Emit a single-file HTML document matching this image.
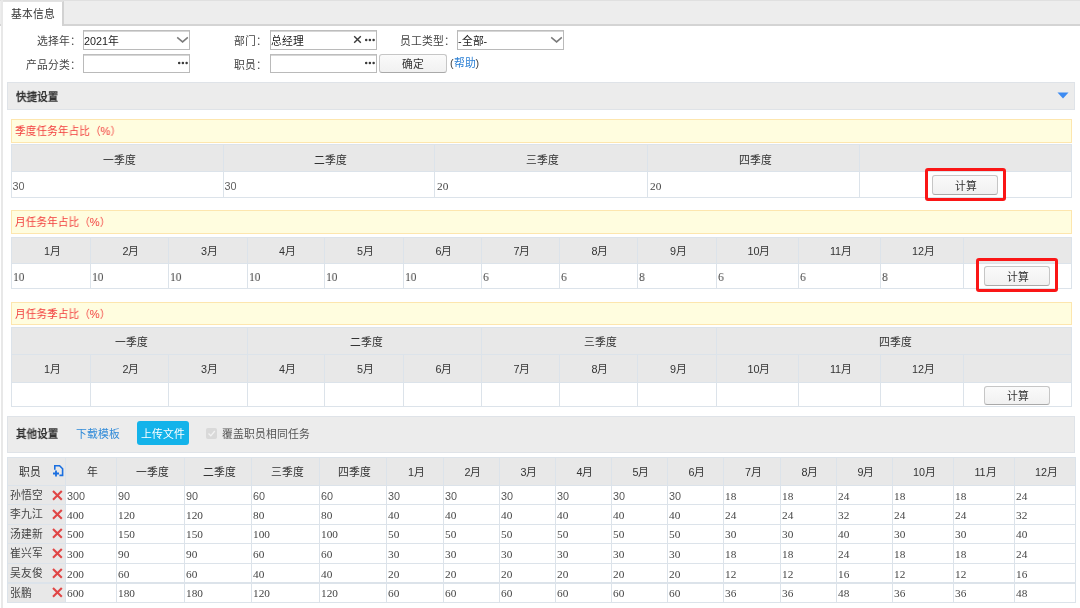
<!DOCTYPE html><html lang="zh-CN"><head><meta charset="utf-8"><style>
html,body{margin:0;padding:0;background:#fff;width:1080px;height:608px;overflow:hidden;position:relative;}
body{font-family:"Liberation Sans",sans-serif;font-size:10.8px;color:#333;}
.a{position:absolute;box-sizing:border-box;}
.t{position:absolute;white-space:nowrap;line-height:0;height:0;will-change:transform;}
.t.c{text-align:center;}
.sr{font-family:"Liberation Serif",serif;color:#444;font-size:11.3px;}
.sr2{font-family:"Liberation Serif",serif;color:#444;font-size:12.5px;transform:scaleX(0.92);transform-origin:0 0;}
.ss{font-family:"Liberation Sans",sans-serif;font-size:10.8px;color:#555;}
.btn{background:linear-gradient(#fafafa,#f1f1f1);border:1px solid #c6c6c6;border-bottom-color:#a9a9a9;border-radius:3px;}
.inp{background:#fff;border:1px solid #bababa;border-top-color:#bdbdbd;box-shadow:inset 0 1px 0 #d6d6d6;}
.hd{background:#e9e9e9;}
.bd{border-color:#dce2e9;}
</style></head><body><div class="a " style="left:0px;top:0px;width:1080px;height:26px;background:#ededed;border-bottom:2px solid #d4d4d4;"></div>
<div class="a " style="left:0px;top:0px;width:1080px;height:1px;background:#e0e0e0;"></div>
<div class="a " style="left:1px;top:0px;width:2px;height:608px;background:#e8e8e8;"></div>
<div class="a " style="left:3px;top:1px;width:61px;height:25px;background:#fff;border-right:2px solid #d2d2d2;border-top:1px solid #e3e3e3;"></div>
<div class="t " style="left:11px;top:13.5px;">基本信息</div>
<div class="t " style="left:80.5px;top:40.5px;transform:translateX(-100%);color:#444;">选择年：</div>
<div class="a inp" style="left:83px;top:30px;width:107px;height:20px;"></div>
<div class="t " style="left:84px;top:40.5px;color:#222;">2021年</div>
<svg class="a" style="left:176px;top:36px" width="13" height="8"><path d="M1.2 1.4 L6.6 5.9 L11.8 1.4" fill="none" stroke="#7a7a7a" stroke-width="1.5"/></svg>
<div class="t " style="left:80.5px;top:64.5px;transform:translateX(-100%);color:#444;">产品分类：</div>
<div class="a inp" style="left:83px;top:54px;width:107px;height:19px;"></div>
<svg class="a" style="left:178px;top:61px" width="11" height="4"><circle cx="1.2" cy="2" r="1.25" fill="#3a3a3a"/><circle cx="4.9" cy="2" r="1.25" fill="#3a3a3a"/><circle cx="8.6" cy="2" r="1.25" fill="#3a3a3a"/></svg>
<div class="t " style="left:267px;top:40.5px;transform:translateX(-100%);color:#444;">部门：</div>
<div class="a inp" style="left:270px;top:30px;width:107px;height:20px;"></div>
<div class="t " style="left:270.5px;top:40.5px;color:#222;">总经理</div>
<svg class="a" style="left:353px;top:35px" width="9" height="9"><path d="M1.2 1.2 L7.8 7.8 M7.8 1.2 L1.2 7.8" stroke="#3a3a3a" stroke-width="1.4"/></svg>
<svg class="a" style="left:365px;top:38px" width="11" height="4"><circle cx="1.2" cy="2" r="1.25" fill="#3a3a3a"/><circle cx="4.9" cy="2" r="1.25" fill="#3a3a3a"/><circle cx="8.6" cy="2" r="1.25" fill="#3a3a3a"/></svg>
<div class="t " style="left:267px;top:64.5px;transform:translateX(-100%);color:#444;">职员：</div>
<div class="a inp" style="left:270px;top:54px;width:107px;height:19px;"></div>
<svg class="a" style="left:365px;top:61px" width="11" height="4"><circle cx="1.2" cy="2" r="1.25" fill="#3a3a3a"/><circle cx="4.9" cy="2" r="1.25" fill="#3a3a3a"/><circle cx="8.6" cy="2" r="1.25" fill="#3a3a3a"/></svg>
<div class="a btn" style="left:379px;top:54px;width:68px;height:19px;"></div>
<div class="t c " style="left:379px;width:68px;top:64px;color:#333;">确定</div>
<div class="t " style="left:449.5px;top:62.5px;color:#444;">(<span style="color:#2a7fd4">帮助</span>)</div>
<div class="t " style="left:454.5px;top:40.5px;transform:translateX(-100%);color:#444;">员工类型：</div>
<div class="a inp" style="left:457px;top:30px;width:107px;height:20px;"></div>
<div class="t " style="left:458px;top:40.5px;color:#222;">-全部-</div>
<svg class="a" style="left:550px;top:36px" width="13" height="8"><path d="M1.2 1.4 L6.6 5.9 L11.8 1.4" fill="none" stroke="#7a7a7a" stroke-width="1.5"/></svg>
<div class="a " style="left:7px;top:82px;width:1068px;height:28px;background:#ececec;border:1px solid #dfe3e8;"></div>
<div class="t " style="left:16.3px;top:96.8px;font-weight:bold;color:#333;transform:scaleX(0.965);transform-origin:0 0;">快捷设置</div>
<svg class="a" style="left:1057px;top:92px" width="12" height="7"><path d="M0.5 0.5 L11.5 0.5 L6 6.5 Z" fill="#3d8bf2"/></svg>
<div class="a " style="left:11px;top:119px;width:1061px;height:24px;background:#fffddf;border:1px solid #fde6ae;"></div>
<div class="t " style="left:15.2px;top:131.3px;color:#f23c3c;transform:scaleX(0.975);transform-origin:0 0;">季度任务年占比<span style="margin-left:-0.5px">（</span><span style="font-size:11.5px;letter-spacing:0.2px">%</span>）</div>
<div class="a " style="left:11px;top:144px;width:213px;height:28px;background:#e8e8e8;border:1px solid #dce3ea;"></div>
<div class="a " style="left:223px;top:144px;width:212px;height:28px;background:#e8e8e8;border:1px solid #dce3ea;"></div>
<div class="a " style="left:434px;top:144px;width:214px;height:28px;background:#e8e8e8;border:1px solid #dce3ea;"></div>
<div class="a " style="left:647px;top:144px;width:213px;height:28px;background:#e8e8e8;border:1px solid #dce3ea;"></div>
<div class="a " style="left:859px;top:144px;width:213px;height:28px;background:#e8e8e8;border:1px solid #dce3ea;"></div>
<div class="t c " style="left:12.5px;width:212.0px;top:159.5px;color:#333;">一季度</div>
<div class="t c " style="left:224.5px;width:211.0px;top:159.5px;color:#333;">二季度</div>
<div class="t c " style="left:435.5px;width:213.0px;top:159.5px;color:#333;">三季度</div>
<div class="t c " style="left:648.5px;width:212.0px;top:159.5px;color:#333;">四季度</div>
<div class="a " style="left:11px;top:171px;width:213px;height:27px;background:#fff;border:1px solid #dce3ea;"></div>
<div class="a " style="left:223px;top:171px;width:212px;height:27px;background:#fff;border:1px solid #dce3ea;"></div>
<div class="a " style="left:434px;top:171px;width:214px;height:27px;background:#fff;border:1px solid #dce3ea;"></div>
<div class="a " style="left:647px;top:171px;width:213px;height:27px;background:#fff;border:1px solid #dce3ea;"></div>
<div class="a " style="left:859px;top:171px;width:213px;height:27px;background:#fff;border:1px solid #dce3ea;"></div>
<div class="t " style="left:13.5px;top:185.5px;color:#606060;"><span style="margin-left:-1.5px">30</span></div>
<div class="t " style="left:225.5px;top:185.5px;color:#606060;"><span style="margin-left:-1.5px">30</span></div>
<div class="t " style="left:436.5px;top:185.5px;color:#606060;"><span class="sr">20</span></div>
<div class="t " style="left:649.5px;top:185.5px;color:#606060;"><span class="sr">20</span></div>
<div class="a btn" style="left:932px;top:175px;width:66px;height:20px;"></div>
<div class="t c " style="left:933px;width:66px;top:185.5px;color:#333;">计算</div>
<div class="a " style="left:925px;top:167.5px;width:80.5px;height:33.0px;border:3px solid #fa1616;border-radius:3px;"></div>
<div class="a " style="left:11px;top:210px;width:1061px;height:24px;background:#fffddf;border:1px solid #fde6ae;"></div>
<div class="t " style="left:15.2px;top:222.3px;color:#f23c3c;transform:scaleX(0.975);transform-origin:0 0;">月任务年占比<span style="margin-left:-0.5px">（</span><span style="font-size:11.5px;letter-spacing:0.2px">%</span>）</div>
<div class="a " style="left:11px;top:237px;width:80px;height:27px;background:#e8e8e8;border:1px solid #dce3ea;"></div>
<div class="a " style="left:90px;top:237px;width:79px;height:27px;background:#e8e8e8;border:1px solid #dce3ea;"></div>
<div class="a " style="left:168px;top:237px;width:80px;height:27px;background:#e8e8e8;border:1px solid #dce3ea;"></div>
<div class="a " style="left:247px;top:237px;width:78px;height:27px;background:#e8e8e8;border:1px solid #dce3ea;"></div>
<div class="a " style="left:324px;top:237px;width:80px;height:27px;background:#e8e8e8;border:1px solid #dce3ea;"></div>
<div class="a " style="left:403px;top:237px;width:79px;height:27px;background:#e8e8e8;border:1px solid #dce3ea;"></div>
<div class="a " style="left:481px;top:237px;width:79px;height:27px;background:#e8e8e8;border:1px solid #dce3ea;"></div>
<div class="a " style="left:559px;top:237px;width:79px;height:27px;background:#e8e8e8;border:1px solid #dce3ea;"></div>
<div class="a " style="left:637px;top:237px;width:80px;height:27px;background:#e8e8e8;border:1px solid #dce3ea;"></div>
<div class="a " style="left:716px;top:237px;width:83px;height:27px;background:#e8e8e8;border:1px solid #dce3ea;"></div>
<div class="a " style="left:798px;top:237px;width:83px;height:27px;background:#e8e8e8;border:1px solid #dce3ea;"></div>
<div class="a " style="left:880px;top:237px;width:84px;height:27px;background:#e8e8e8;border:1px solid #dce3ea;"></div>
<div class="a " style="left:963px;top:237px;width:109px;height:27px;background:#e8e8e8;border:1px solid #dce3ea;"></div>
<div class="t c " style="left:12.5px;width:79.0px;top:250.5px;color:#333;">1月</div>
<div class="t c " style="left:91.5px;width:78.0px;top:250.5px;color:#333;">2月</div>
<div class="t c " style="left:169.5px;width:79.0px;top:250.5px;color:#333;">3月</div>
<div class="t c " style="left:248.5px;width:77.0px;top:250.5px;color:#333;">4月</div>
<div class="t c " style="left:325.5px;width:79.0px;top:250.5px;color:#333;">5月</div>
<div class="t c " style="left:404.5px;width:78.0px;top:250.5px;color:#333;">6月</div>
<div class="t c " style="left:482.5px;width:78.0px;top:250.5px;color:#333;">7月</div>
<div class="t c " style="left:560.5px;width:78.0px;top:250.5px;color:#333;">8月</div>
<div class="t c " style="left:638.5px;width:79.0px;top:250.5px;color:#333;">9月</div>
<div class="t c " style="left:717.5px;width:82.0px;top:250.5px;color:#333;">10月</div>
<div class="t c " style="left:799.5px;width:82.0px;top:250.5px;color:#333;">11月</div>
<div class="t c " style="left:881.5px;width:83.0px;top:250.5px;color:#333;">12月</div>
<div class="a " style="left:11px;top:263px;width:80px;height:26px;background:#fff;border:1px solid #dce3ea;"></div>
<div class="a " style="left:90px;top:263px;width:79px;height:26px;background:#fff;border:1px solid #dce3ea;"></div>
<div class="a " style="left:168px;top:263px;width:80px;height:26px;background:#fff;border:1px solid #dce3ea;"></div>
<div class="a " style="left:247px;top:263px;width:78px;height:26px;background:#fff;border:1px solid #dce3ea;"></div>
<div class="a " style="left:324px;top:263px;width:80px;height:26px;background:#fff;border:1px solid #dce3ea;"></div>
<div class="a " style="left:403px;top:263px;width:79px;height:26px;background:#fff;border:1px solid #dce3ea;"></div>
<div class="a " style="left:481px;top:263px;width:79px;height:26px;background:#fff;border:1px solid #dce3ea;"></div>
<div class="a " style="left:559px;top:263px;width:79px;height:26px;background:#fff;border:1px solid #dce3ea;"></div>
<div class="a " style="left:637px;top:263px;width:80px;height:26px;background:#fff;border:1px solid #dce3ea;"></div>
<div class="a " style="left:716px;top:263px;width:83px;height:26px;background:#fff;border:1px solid #dce3ea;"></div>
<div class="a " style="left:798px;top:263px;width:83px;height:26px;background:#fff;border:1px solid #dce3ea;"></div>
<div class="a " style="left:880px;top:263px;width:84px;height:26px;background:#fff;border:1px solid #dce3ea;"></div>
<div class="a " style="left:963px;top:263px;width:109px;height:26px;background:#fff;border:1px solid #dce3ea;"></div>
<div class="t sr2" style="left:13px;top:277.0px;">10</div>
<div class="t sr2" style="left:92px;top:277.0px;">10</div>
<div class="t sr2" style="left:170px;top:277.0px;">10</div>
<div class="t sr2" style="left:249px;top:277.0px;">10</div>
<div class="t sr2" style="left:326px;top:277.0px;">10</div>
<div class="t sr2" style="left:405px;top:277.0px;">10</div>
<div class="t sr2" style="left:483px;top:277.0px;">6</div>
<div class="t sr2" style="left:561px;top:277.0px;">6</div>
<div class="t sr2" style="left:639px;top:277.0px;">8</div>
<div class="t sr2" style="left:718px;top:277.0px;">6</div>
<div class="t sr2" style="left:800px;top:277.0px;">6</div>
<div class="t sr2" style="left:882px;top:277.0px;">8</div>
<div class="a btn" style="left:984px;top:266px;width:66px;height:20px;"></div>
<div class="t c " style="left:985px;width:66px;top:276.5px;color:#333;">计算</div>
<div class="a " style="left:976px;top:258px;width:82px;height:33.5px;border:3px solid #fa1616;border-radius:3px;"></div>
<div class="a " style="left:11px;top:302px;width:1061px;height:23px;background:#fffddf;border:1px solid #fde6ae;"></div>
<div class="t " style="left:15.2px;top:313.8px;color:#f23c3c;transform:scaleX(0.975);transform-origin:0 0;">月任务季占比<span style="margin-left:-0.5px">（</span><span style="font-size:11.5px;letter-spacing:0.2px">%</span>）</div>
<div class="a " style="left:11px;top:327px;width:237px;height:28px;background:#e8e8e8;border:1px solid #dce3ea;"></div>
<div class="a " style="left:247px;top:327px;width:235px;height:28px;background:#e8e8e8;border:1px solid #dce3ea;"></div>
<div class="a " style="left:481px;top:327px;width:236px;height:28px;background:#e8e8e8;border:1px solid #dce3ea;"></div>
<div class="a " style="left:716px;top:327px;width:356px;height:28px;background:#e8e8e8;border:1px solid #dce3ea;"></div>
<div class="t c " style="left:12.5px;width:236.0px;top:342.0px;color:#333;">一季度</div>
<div class="t c " style="left:248.5px;width:234.0px;top:342.0px;color:#333;">二季度</div>
<div class="t c " style="left:482.5px;width:235.0px;top:342.0px;color:#333;">三季度</div>
<div class="t c " style="left:717.5px;width:355.0px;top:342.0px;color:#333;">四季度</div>
<div class="a " style="left:11px;top:354px;width:80px;height:29px;background:#e8e8e8;border:1px solid #dce3ea;"></div>
<div class="a " style="left:90px;top:354px;width:79px;height:29px;background:#e8e8e8;border:1px solid #dce3ea;"></div>
<div class="a " style="left:168px;top:354px;width:80px;height:29px;background:#e8e8e8;border:1px solid #dce3ea;"></div>
<div class="a " style="left:247px;top:354px;width:78px;height:29px;background:#e8e8e8;border:1px solid #dce3ea;"></div>
<div class="a " style="left:324px;top:354px;width:80px;height:29px;background:#e8e8e8;border:1px solid #dce3ea;"></div>
<div class="a " style="left:403px;top:354px;width:79px;height:29px;background:#e8e8e8;border:1px solid #dce3ea;"></div>
<div class="a " style="left:481px;top:354px;width:79px;height:29px;background:#e8e8e8;border:1px solid #dce3ea;"></div>
<div class="a " style="left:559px;top:354px;width:79px;height:29px;background:#e8e8e8;border:1px solid #dce3ea;"></div>
<div class="a " style="left:637px;top:354px;width:80px;height:29px;background:#e8e8e8;border:1px solid #dce3ea;"></div>
<div class="a " style="left:716px;top:354px;width:83px;height:29px;background:#e8e8e8;border:1px solid #dce3ea;"></div>
<div class="a " style="left:798px;top:354px;width:83px;height:29px;background:#e8e8e8;border:1px solid #dce3ea;"></div>
<div class="a " style="left:880px;top:354px;width:84px;height:29px;background:#e8e8e8;border:1px solid #dce3ea;"></div>
<div class="a " style="left:963px;top:354px;width:109px;height:29px;background:#e8e8e8;border:1px solid #dce3ea;"></div>
<div class="t c " style="left:12.5px;width:79.0px;top:368.5px;color:#333;">1月</div>
<div class="t c " style="left:91.5px;width:78.0px;top:368.5px;color:#333;">2月</div>
<div class="t c " style="left:169.5px;width:79.0px;top:368.5px;color:#333;">3月</div>
<div class="t c " style="left:248.5px;width:77.0px;top:368.5px;color:#333;">4月</div>
<div class="t c " style="left:325.5px;width:79.0px;top:368.5px;color:#333;">5月</div>
<div class="t c " style="left:404.5px;width:78.0px;top:368.5px;color:#333;">6月</div>
<div class="t c " style="left:482.5px;width:78.0px;top:368.5px;color:#333;">7月</div>
<div class="t c " style="left:560.5px;width:78.0px;top:368.5px;color:#333;">8月</div>
<div class="t c " style="left:638.5px;width:79.0px;top:368.5px;color:#333;">9月</div>
<div class="t c " style="left:717.5px;width:82.0px;top:368.5px;color:#333;">10月</div>
<div class="t c " style="left:799.5px;width:82.0px;top:368.5px;color:#333;">11月</div>
<div class="t c " style="left:881.5px;width:83.0px;top:368.5px;color:#333;">12月</div>
<div class="a " style="left:11px;top:382px;width:80px;height:25px;background:#fff;border:1px solid #dce3ea;"></div>
<div class="a " style="left:90px;top:382px;width:79px;height:25px;background:#fff;border:1px solid #dce3ea;"></div>
<div class="a " style="left:168px;top:382px;width:80px;height:25px;background:#fff;border:1px solid #dce3ea;"></div>
<div class="a " style="left:247px;top:382px;width:78px;height:25px;background:#fff;border:1px solid #dce3ea;"></div>
<div class="a " style="left:324px;top:382px;width:80px;height:25px;background:#fff;border:1px solid #dce3ea;"></div>
<div class="a " style="left:403px;top:382px;width:79px;height:25px;background:#fff;border:1px solid #dce3ea;"></div>
<div class="a " style="left:481px;top:382px;width:79px;height:25px;background:#fff;border:1px solid #dce3ea;"></div>
<div class="a " style="left:559px;top:382px;width:79px;height:25px;background:#fff;border:1px solid #dce3ea;"></div>
<div class="a " style="left:637px;top:382px;width:80px;height:25px;background:#fff;border:1px solid #dce3ea;"></div>
<div class="a " style="left:716px;top:382px;width:83px;height:25px;background:#fff;border:1px solid #dce3ea;"></div>
<div class="a " style="left:798px;top:382px;width:83px;height:25px;background:#fff;border:1px solid #dce3ea;"></div>
<div class="a " style="left:880px;top:382px;width:84px;height:25px;background:#fff;border:1px solid #dce3ea;"></div>
<div class="a " style="left:963px;top:382px;width:109px;height:25px;background:#fff;border:1px solid #dce3ea;"></div>
<div class="a btn" style="left:984px;top:386px;width:66px;height:19px;"></div>
<div class="t c " style="left:985px;width:66px;top:395.5px;color:#333;">计算</div>
<div class="a " style="left:7px;top:416px;width:1068px;height:37px;background:#ececec;border:1px solid #dfe3e8;"></div>
<div class="t " style="left:16.3px;top:434px;font-weight:bold;color:#333;transform:scaleX(0.965);transform-origin:0 0;">其他设置</div>
<div class="t " style="left:75.5px;top:434px;color:#2f8ad8;">下载模板</div>
<div class="a " style="left:137px;top:421px;width:52px;height:24px;background:#13b3ea;border-radius:3px;"></div>
<div class="t c " style="left:137px;width:52px;top:433.5px;color:#fff;">上传文件</div>
<div class="a " style="left:206px;top:428px;width:11px;height:11px;background:#d9d9d9;border-radius:2px;"></div>
<svg class="a" style="left:207px;top:429px" width="9" height="9"><path d="M1.5 4.5 L3.8 6.8 L7.8 2" fill="none" stroke="#f2f2f2" stroke-width="1.3"/></svg>
<div class="t " style="left:221.5px;top:434px;color:#555;">覆盖职员相同任务</div>
<div class="a " style="left:7px;top:457px;width:59px;height:29px;background:#e8e8e8;border:1px solid #dce3ea;"></div>
<div class="a " style="left:65px;top:457px;width:52px;height:29px;background:#e8e8e8;border:1px solid #dce3ea;"></div>
<div class="a " style="left:116px;top:457px;width:69px;height:29px;background:#e8e8e8;border:1px solid #dce3ea;"></div>
<div class="a " style="left:184px;top:457px;width:68px;height:29px;background:#e8e8e8;border:1px solid #dce3ea;"></div>
<div class="a " style="left:251px;top:457px;width:69px;height:29px;background:#e8e8e8;border:1px solid #dce3ea;"></div>
<div class="a " style="left:319px;top:457px;width:68px;height:29px;background:#e8e8e8;border:1px solid #dce3ea;"></div>
<div class="a " style="left:386px;top:457px;width:58px;height:29px;background:#e8e8e8;border:1px solid #dce3ea;"></div>
<div class="a " style="left:443px;top:457px;width:57px;height:29px;background:#e8e8e8;border:1px solid #dce3ea;"></div>
<div class="a " style="left:499px;top:457px;width:57px;height:29px;background:#e8e8e8;border:1px solid #dce3ea;"></div>
<div class="a " style="left:555px;top:457px;width:57px;height:29px;background:#e8e8e8;border:1px solid #dce3ea;"></div>
<div class="a " style="left:611px;top:457px;width:57px;height:29px;background:#e8e8e8;border:1px solid #dce3ea;"></div>
<div class="a " style="left:667px;top:457px;width:57px;height:29px;background:#e8e8e8;border:1px solid #dce3ea;"></div>
<div class="a " style="left:723px;top:457px;width:58px;height:29px;background:#e8e8e8;border:1px solid #dce3ea;"></div>
<div class="a " style="left:780px;top:457px;width:57px;height:29px;background:#e8e8e8;border:1px solid #dce3ea;"></div>
<div class="a " style="left:836px;top:457px;width:57px;height:29px;background:#e8e8e8;border:1px solid #dce3ea;"></div>
<div class="a " style="left:892px;top:457px;width:62px;height:29px;background:#e8e8e8;border:1px solid #dce3ea;"></div>
<div class="a " style="left:953px;top:457px;width:62px;height:29px;background:#e8e8e8;border:1px solid #dce3ea;"></div>
<div class="a " style="left:1014px;top:457px;width:62px;height:29px;background:#e8e8e8;border:1px solid #dce3ea;"></div>
<div class="t c " style="left:66.5px;width:51.0px;top:471.5px;color:#333;">年</div>
<div class="t c " style="left:117.5px;width:68.0px;top:471.5px;color:#333;">一季度</div>
<div class="t c " style="left:185.5px;width:67.0px;top:471.5px;color:#333;">二季度</div>
<div class="t c " style="left:252.5px;width:68.0px;top:471.5px;color:#333;">三季度</div>
<div class="t c " style="left:320.5px;width:67.0px;top:471.5px;color:#333;">四季度</div>
<div class="t c " style="left:387.5px;width:57.0px;top:471.5px;color:#333;">1月</div>
<div class="t c " style="left:444.5px;width:56.0px;top:471.5px;color:#333;">2月</div>
<div class="t c " style="left:500.5px;width:56.0px;top:471.5px;color:#333;">3月</div>
<div class="t c " style="left:556.5px;width:56.0px;top:471.5px;color:#333;">4月</div>
<div class="t c " style="left:612.5px;width:56.0px;top:471.5px;color:#333;">5月</div>
<div class="t c " style="left:668.5px;width:56.0px;top:471.5px;color:#333;">6月</div>
<div class="t c " style="left:724.5px;width:57.0px;top:471.5px;color:#333;">7月</div>
<div class="t c " style="left:781.5px;width:56.0px;top:471.5px;color:#333;">8月</div>
<div class="t c " style="left:837.5px;width:56.0px;top:471.5px;color:#333;">9月</div>
<div class="t c " style="left:893.5px;width:61.0px;top:471.5px;color:#333;">10月</div>
<div class="t c " style="left:954.5px;width:61.0px;top:471.5px;color:#333;">11月</div>
<div class="t c " style="left:1015.5px;width:61.0px;top:471.5px;color:#333;">12月</div>
<div class="a " style="left:7px;top:485px;width:59px;height:20px;background:#e8e8e8;border:1px solid #dce3ea;"></div>
<div class="t " style="left:9.5px;top:495.0px;color:#444;">孙悟空</div>
<svg class="a" style="left:51px;top:488.5px" width="13" height="12"><path d="M2 2 L10.8 10.8 M10.8 2 L2 10.8" stroke="#e04646" stroke-width="2.1"/></svg>
<div class="a " style="left:65px;top:485px;width:52px;height:20px;background:#fff;border:1px solid #dce3ea;"></div>
<div class="a " style="left:116px;top:485px;width:69px;height:20px;background:#fff;border:1px solid #dce3ea;"></div>
<div class="a " style="left:184px;top:485px;width:68px;height:20px;background:#fff;border:1px solid #dce3ea;"></div>
<div class="a " style="left:251px;top:485px;width:69px;height:20px;background:#fff;border:1px solid #dce3ea;"></div>
<div class="a " style="left:319px;top:485px;width:68px;height:20px;background:#fff;border:1px solid #dce3ea;"></div>
<div class="a " style="left:386px;top:485px;width:58px;height:20px;background:#fff;border:1px solid #dce3ea;"></div>
<div class="a " style="left:443px;top:485px;width:57px;height:20px;background:#fff;border:1px solid #dce3ea;"></div>
<div class="a " style="left:499px;top:485px;width:57px;height:20px;background:#fff;border:1px solid #dce3ea;"></div>
<div class="a " style="left:555px;top:485px;width:57px;height:20px;background:#fff;border:1px solid #dce3ea;"></div>
<div class="a " style="left:611px;top:485px;width:57px;height:20px;background:#fff;border:1px solid #dce3ea;"></div>
<div class="a " style="left:667px;top:485px;width:57px;height:20px;background:#fff;border:1px solid #dce3ea;"></div>
<div class="a " style="left:723px;top:485px;width:58px;height:20px;background:#fff;border:1px solid #dce3ea;"></div>
<div class="a " style="left:780px;top:485px;width:57px;height:20px;background:#fff;border:1px solid #dce3ea;"></div>
<div class="a " style="left:836px;top:485px;width:57px;height:20px;background:#fff;border:1px solid #dce3ea;"></div>
<div class="a " style="left:892px;top:485px;width:62px;height:20px;background:#fff;border:1px solid #dce3ea;"></div>
<div class="a " style="left:953px;top:485px;width:62px;height:20px;background:#fff;border:1px solid #dce3ea;"></div>
<div class="a " style="left:1014px;top:485px;width:62px;height:20px;background:#fff;border:1px solid #dce3ea;"></div>
<div class="t sr" style="left:66.5px;top:495.5px;"><span class="ss">300</span></div>
<div class="t sr" style="left:117.5px;top:495.5px;"><span class="ss">90</span></div>
<div class="t sr" style="left:185.5px;top:495.5px;"><span class="ss">90</span></div>
<div class="t sr" style="left:252.5px;top:495.5px;"><span class="ss">60</span></div>
<div class="t sr" style="left:320.5px;top:495.5px;"><span class="ss">60</span></div>
<div class="t sr" style="left:387.5px;top:495.5px;"><span class="ss">30</span></div>
<div class="t sr" style="left:444.5px;top:495.5px;"><span class="ss">30</span></div>
<div class="t sr" style="left:500.5px;top:495.5px;"><span class="ss">30</span></div>
<div class="t sr" style="left:556.5px;top:495.5px;"><span class="ss">30</span></div>
<div class="t sr" style="left:612.5px;top:495.5px;"><span class="ss">30</span></div>
<div class="t sr" style="left:668.5px;top:495.5px;"><span class="ss">30</span></div>
<div class="t sr" style="left:724.5px;top:495.5px;">18</div>
<div class="t sr" style="left:781.5px;top:495.5px;">18</div>
<div class="t sr" style="left:837.5px;top:495.5px;">24</div>
<div class="t sr" style="left:893.5px;top:495.5px;">18</div>
<div class="t sr" style="left:954.5px;top:495.5px;">18</div>
<div class="t sr" style="left:1015.5px;top:495.5px;">24</div>
<div class="a " style="left:7px;top:504px;width:59px;height:20.5px;background:#e8e8e8;border:1px solid #dce3ea;"></div>
<div class="t " style="left:9.5px;top:514.25px;color:#444;">李九江</div>
<svg class="a" style="left:51px;top:507.75px" width="13" height="12"><path d="M2 2 L10.8 10.8 M10.8 2 L2 10.8" stroke="#e04646" stroke-width="2.1"/></svg>
<div class="a " style="left:65px;top:504px;width:52px;height:20.5px;background:#fff;border:1px solid #dce3ea;"></div>
<div class="a " style="left:116px;top:504px;width:69px;height:20.5px;background:#fff;border:1px solid #dce3ea;"></div>
<div class="a " style="left:184px;top:504px;width:68px;height:20.5px;background:#fff;border:1px solid #dce3ea;"></div>
<div class="a " style="left:251px;top:504px;width:69px;height:20.5px;background:#fff;border:1px solid #dce3ea;"></div>
<div class="a " style="left:319px;top:504px;width:68px;height:20.5px;background:#fff;border:1px solid #dce3ea;"></div>
<div class="a " style="left:386px;top:504px;width:58px;height:20.5px;background:#fff;border:1px solid #dce3ea;"></div>
<div class="a " style="left:443px;top:504px;width:57px;height:20.5px;background:#fff;border:1px solid #dce3ea;"></div>
<div class="a " style="left:499px;top:504px;width:57px;height:20.5px;background:#fff;border:1px solid #dce3ea;"></div>
<div class="a " style="left:555px;top:504px;width:57px;height:20.5px;background:#fff;border:1px solid #dce3ea;"></div>
<div class="a " style="left:611px;top:504px;width:57px;height:20.5px;background:#fff;border:1px solid #dce3ea;"></div>
<div class="a " style="left:667px;top:504px;width:57px;height:20.5px;background:#fff;border:1px solid #dce3ea;"></div>
<div class="a " style="left:723px;top:504px;width:58px;height:20.5px;background:#fff;border:1px solid #dce3ea;"></div>
<div class="a " style="left:780px;top:504px;width:57px;height:20.5px;background:#fff;border:1px solid #dce3ea;"></div>
<div class="a " style="left:836px;top:504px;width:57px;height:20.5px;background:#fff;border:1px solid #dce3ea;"></div>
<div class="a " style="left:892px;top:504px;width:62px;height:20.5px;background:#fff;border:1px solid #dce3ea;"></div>
<div class="a " style="left:953px;top:504px;width:62px;height:20.5px;background:#fff;border:1px solid #dce3ea;"></div>
<div class="a " style="left:1014px;top:504px;width:62px;height:20.5px;background:#fff;border:1px solid #dce3ea;"></div>
<div class="t sr" style="left:66.5px;top:514.75px;">400</div>
<div class="t sr" style="left:117.5px;top:514.75px;">120</div>
<div class="t sr" style="left:185.5px;top:514.75px;">120</div>
<div class="t sr" style="left:252.5px;top:514.75px;">80</div>
<div class="t sr" style="left:320.5px;top:514.75px;">80</div>
<div class="t sr" style="left:387.5px;top:514.75px;">40</div>
<div class="t sr" style="left:444.5px;top:514.75px;">40</div>
<div class="t sr" style="left:500.5px;top:514.75px;">40</div>
<div class="t sr" style="left:556.5px;top:514.75px;">40</div>
<div class="t sr" style="left:612.5px;top:514.75px;">40</div>
<div class="t sr" style="left:668.5px;top:514.75px;">40</div>
<div class="t sr" style="left:724.5px;top:514.75px;">24</div>
<div class="t sr" style="left:781.5px;top:514.75px;">24</div>
<div class="t sr" style="left:837.5px;top:514.75px;">32</div>
<div class="t sr" style="left:893.5px;top:514.75px;">24</div>
<div class="t sr" style="left:954.5px;top:514.75px;">24</div>
<div class="t sr" style="left:1015.5px;top:514.75px;">32</div>
<div class="a " style="left:7px;top:523.5px;width:59px;height:20.5px;background:#e8e8e8;border:1px solid #dce3ea;"></div>
<div class="t " style="left:9.5px;top:533.75px;color:#444;">汤建新</div>
<svg class="a" style="left:51px;top:527.25px" width="13" height="12"><path d="M2 2 L10.8 10.8 M10.8 2 L2 10.8" stroke="#e04646" stroke-width="2.1"/></svg>
<div class="a " style="left:65px;top:523.5px;width:52px;height:20.5px;background:#fff;border:1px solid #dce3ea;"></div>
<div class="a " style="left:116px;top:523.5px;width:69px;height:20.5px;background:#fff;border:1px solid #dce3ea;"></div>
<div class="a " style="left:184px;top:523.5px;width:68px;height:20.5px;background:#fff;border:1px solid #dce3ea;"></div>
<div class="a " style="left:251px;top:523.5px;width:69px;height:20.5px;background:#fff;border:1px solid #dce3ea;"></div>
<div class="a " style="left:319px;top:523.5px;width:68px;height:20.5px;background:#fff;border:1px solid #dce3ea;"></div>
<div class="a " style="left:386px;top:523.5px;width:58px;height:20.5px;background:#fff;border:1px solid #dce3ea;"></div>
<div class="a " style="left:443px;top:523.5px;width:57px;height:20.5px;background:#fff;border:1px solid #dce3ea;"></div>
<div class="a " style="left:499px;top:523.5px;width:57px;height:20.5px;background:#fff;border:1px solid #dce3ea;"></div>
<div class="a " style="left:555px;top:523.5px;width:57px;height:20.5px;background:#fff;border:1px solid #dce3ea;"></div>
<div class="a " style="left:611px;top:523.5px;width:57px;height:20.5px;background:#fff;border:1px solid #dce3ea;"></div>
<div class="a " style="left:667px;top:523.5px;width:57px;height:20.5px;background:#fff;border:1px solid #dce3ea;"></div>
<div class="a " style="left:723px;top:523.5px;width:58px;height:20.5px;background:#fff;border:1px solid #dce3ea;"></div>
<div class="a " style="left:780px;top:523.5px;width:57px;height:20.5px;background:#fff;border:1px solid #dce3ea;"></div>
<div class="a " style="left:836px;top:523.5px;width:57px;height:20.5px;background:#fff;border:1px solid #dce3ea;"></div>
<div class="a " style="left:892px;top:523.5px;width:62px;height:20.5px;background:#fff;border:1px solid #dce3ea;"></div>
<div class="a " style="left:953px;top:523.5px;width:62px;height:20.5px;background:#fff;border:1px solid #dce3ea;"></div>
<div class="a " style="left:1014px;top:523.5px;width:62px;height:20.5px;background:#fff;border:1px solid #dce3ea;"></div>
<div class="t sr" style="left:66.5px;top:534.25px;">500</div>
<div class="t sr" style="left:117.5px;top:534.25px;">150</div>
<div class="t sr" style="left:185.5px;top:534.25px;">150</div>
<div class="t sr" style="left:252.5px;top:534.25px;">100</div>
<div class="t sr" style="left:320.5px;top:534.25px;">100</div>
<div class="t sr" style="left:387.5px;top:534.25px;">50</div>
<div class="t sr" style="left:444.5px;top:534.25px;">50</div>
<div class="t sr" style="left:500.5px;top:534.25px;">50</div>
<div class="t sr" style="left:556.5px;top:534.25px;">50</div>
<div class="t sr" style="left:612.5px;top:534.25px;">50</div>
<div class="t sr" style="left:668.5px;top:534.25px;">50</div>
<div class="t sr" style="left:724.5px;top:534.25px;">30</div>
<div class="t sr" style="left:781.5px;top:534.25px;">30</div>
<div class="t sr" style="left:837.5px;top:534.25px;">40</div>
<div class="t sr" style="left:893.5px;top:534.25px;">30</div>
<div class="t sr" style="left:954.5px;top:534.25px;">30</div>
<div class="t sr" style="left:1015.5px;top:534.25px;">40</div>
<div class="a " style="left:7px;top:543px;width:59px;height:20.5px;background:#e8e8e8;border:1px solid #dce3ea;"></div>
<div class="t " style="left:9.5px;top:553.25px;color:#444;">崔兴军</div>
<svg class="a" style="left:51px;top:546.75px" width="13" height="12"><path d="M2 2 L10.8 10.8 M10.8 2 L2 10.8" stroke="#e04646" stroke-width="2.1"/></svg>
<div class="a " style="left:65px;top:543px;width:52px;height:20.5px;background:#fff;border:1px solid #dce3ea;"></div>
<div class="a " style="left:116px;top:543px;width:69px;height:20.5px;background:#fff;border:1px solid #dce3ea;"></div>
<div class="a " style="left:184px;top:543px;width:68px;height:20.5px;background:#fff;border:1px solid #dce3ea;"></div>
<div class="a " style="left:251px;top:543px;width:69px;height:20.5px;background:#fff;border:1px solid #dce3ea;"></div>
<div class="a " style="left:319px;top:543px;width:68px;height:20.5px;background:#fff;border:1px solid #dce3ea;"></div>
<div class="a " style="left:386px;top:543px;width:58px;height:20.5px;background:#fff;border:1px solid #dce3ea;"></div>
<div class="a " style="left:443px;top:543px;width:57px;height:20.5px;background:#fff;border:1px solid #dce3ea;"></div>
<div class="a " style="left:499px;top:543px;width:57px;height:20.5px;background:#fff;border:1px solid #dce3ea;"></div>
<div class="a " style="left:555px;top:543px;width:57px;height:20.5px;background:#fff;border:1px solid #dce3ea;"></div>
<div class="a " style="left:611px;top:543px;width:57px;height:20.5px;background:#fff;border:1px solid #dce3ea;"></div>
<div class="a " style="left:667px;top:543px;width:57px;height:20.5px;background:#fff;border:1px solid #dce3ea;"></div>
<div class="a " style="left:723px;top:543px;width:58px;height:20.5px;background:#fff;border:1px solid #dce3ea;"></div>
<div class="a " style="left:780px;top:543px;width:57px;height:20.5px;background:#fff;border:1px solid #dce3ea;"></div>
<div class="a " style="left:836px;top:543px;width:57px;height:20.5px;background:#fff;border:1px solid #dce3ea;"></div>
<div class="a " style="left:892px;top:543px;width:62px;height:20.5px;background:#fff;border:1px solid #dce3ea;"></div>
<div class="a " style="left:953px;top:543px;width:62px;height:20.5px;background:#fff;border:1px solid #dce3ea;"></div>
<div class="a " style="left:1014px;top:543px;width:62px;height:20.5px;background:#fff;border:1px solid #dce3ea;"></div>
<div class="t sr" style="left:66.5px;top:553.75px;">300</div>
<div class="t sr" style="left:117.5px;top:553.75px;">90</div>
<div class="t sr" style="left:185.5px;top:553.75px;">90</div>
<div class="t sr" style="left:252.5px;top:553.75px;">60</div>
<div class="t sr" style="left:320.5px;top:553.75px;">60</div>
<div class="t sr" style="left:387.5px;top:553.75px;">30</div>
<div class="t sr" style="left:444.5px;top:553.75px;">30</div>
<div class="t sr" style="left:500.5px;top:553.75px;">30</div>
<div class="t sr" style="left:556.5px;top:553.75px;">30</div>
<div class="t sr" style="left:612.5px;top:553.75px;">30</div>
<div class="t sr" style="left:668.5px;top:553.75px;">30</div>
<div class="t sr" style="left:724.5px;top:553.75px;">18</div>
<div class="t sr" style="left:781.5px;top:553.75px;">18</div>
<div class="t sr" style="left:837.5px;top:553.75px;">24</div>
<div class="t sr" style="left:893.5px;top:553.75px;">18</div>
<div class="t sr" style="left:954.5px;top:553.75px;">18</div>
<div class="t sr" style="left:1015.5px;top:553.75px;">24</div>
<div class="a " style="left:7px;top:562.5px;width:59px;height:21.0px;background:#e8e8e8;border:1px solid #dce3ea;"></div>
<div class="t " style="left:9.5px;top:573.0px;color:#444;">吴友俊</div>
<svg class="a" style="left:51px;top:566.5px" width="13" height="12"><path d="M2 2 L10.8 10.8 M10.8 2 L2 10.8" stroke="#e04646" stroke-width="2.1"/></svg>
<div class="a " style="left:65px;top:562.5px;width:52px;height:21.0px;background:#fff;border:1px solid #dce3ea;"></div>
<div class="a " style="left:116px;top:562.5px;width:69px;height:21.0px;background:#fff;border:1px solid #dce3ea;"></div>
<div class="a " style="left:184px;top:562.5px;width:68px;height:21.0px;background:#fff;border:1px solid #dce3ea;"></div>
<div class="a " style="left:251px;top:562.5px;width:69px;height:21.0px;background:#fff;border:1px solid #dce3ea;"></div>
<div class="a " style="left:319px;top:562.5px;width:68px;height:21.0px;background:#fff;border:1px solid #dce3ea;"></div>
<div class="a " style="left:386px;top:562.5px;width:58px;height:21.0px;background:#fff;border:1px solid #dce3ea;"></div>
<div class="a " style="left:443px;top:562.5px;width:57px;height:21.0px;background:#fff;border:1px solid #dce3ea;"></div>
<div class="a " style="left:499px;top:562.5px;width:57px;height:21.0px;background:#fff;border:1px solid #dce3ea;"></div>
<div class="a " style="left:555px;top:562.5px;width:57px;height:21.0px;background:#fff;border:1px solid #dce3ea;"></div>
<div class="a " style="left:611px;top:562.5px;width:57px;height:21.0px;background:#fff;border:1px solid #dce3ea;"></div>
<div class="a " style="left:667px;top:562.5px;width:57px;height:21.0px;background:#fff;border:1px solid #dce3ea;"></div>
<div class="a " style="left:723px;top:562.5px;width:58px;height:21.0px;background:#fff;border:1px solid #dce3ea;"></div>
<div class="a " style="left:780px;top:562.5px;width:57px;height:21.0px;background:#fff;border:1px solid #dce3ea;"></div>
<div class="a " style="left:836px;top:562.5px;width:57px;height:21.0px;background:#fff;border:1px solid #dce3ea;"></div>
<div class="a " style="left:892px;top:562.5px;width:62px;height:21.0px;background:#fff;border:1px solid #dce3ea;"></div>
<div class="a " style="left:953px;top:562.5px;width:62px;height:21.0px;background:#fff;border:1px solid #dce3ea;"></div>
<div class="a " style="left:1014px;top:562.5px;width:62px;height:21.0px;background:#fff;border:1px solid #dce3ea;"></div>
<div class="t sr" style="left:66.5px;top:573.5px;">200</div>
<div class="t sr" style="left:117.5px;top:573.5px;">60</div>
<div class="t sr" style="left:185.5px;top:573.5px;">60</div>
<div class="t sr" style="left:252.5px;top:573.5px;">40</div>
<div class="t sr" style="left:320.5px;top:573.5px;">40</div>
<div class="t sr" style="left:387.5px;top:573.5px;">20</div>
<div class="t sr" style="left:444.5px;top:573.5px;">20</div>
<div class="t sr" style="left:500.5px;top:573.5px;">20</div>
<div class="t sr" style="left:556.5px;top:573.5px;">20</div>
<div class="t sr" style="left:612.5px;top:573.5px;">20</div>
<div class="t sr" style="left:668.5px;top:573.5px;">20</div>
<div class="t sr" style="left:724.5px;top:573.5px;">12</div>
<div class="t sr" style="left:781.5px;top:573.5px;">12</div>
<div class="t sr" style="left:837.5px;top:573.5px;">16</div>
<div class="t sr" style="left:893.5px;top:573.5px;">12</div>
<div class="t sr" style="left:954.5px;top:573.5px;">12</div>
<div class="t sr" style="left:1015.5px;top:573.5px;">16</div>
<div class="a " style="left:7px;top:582.5px;width:59px;height:20.5px;background:#e8e8e8;border:1px solid #dce3ea;"></div>
<div class="t " style="left:9.5px;top:592.75px;color:#444;">张鹏</div>
<svg class="a" style="left:51px;top:586.25px" width="13" height="12"><path d="M2 2 L10.8 10.8 M10.8 2 L2 10.8" stroke="#e04646" stroke-width="2.1"/></svg>
<div class="a " style="left:65px;top:582.5px;width:52px;height:20.5px;background:#fff;border:1px solid #dce3ea;"></div>
<div class="a " style="left:116px;top:582.5px;width:69px;height:20.5px;background:#fff;border:1px solid #dce3ea;"></div>
<div class="a " style="left:184px;top:582.5px;width:68px;height:20.5px;background:#fff;border:1px solid #dce3ea;"></div>
<div class="a " style="left:251px;top:582.5px;width:69px;height:20.5px;background:#fff;border:1px solid #dce3ea;"></div>
<div class="a " style="left:319px;top:582.5px;width:68px;height:20.5px;background:#fff;border:1px solid #dce3ea;"></div>
<div class="a " style="left:386px;top:582.5px;width:58px;height:20.5px;background:#fff;border:1px solid #dce3ea;"></div>
<div class="a " style="left:443px;top:582.5px;width:57px;height:20.5px;background:#fff;border:1px solid #dce3ea;"></div>
<div class="a " style="left:499px;top:582.5px;width:57px;height:20.5px;background:#fff;border:1px solid #dce3ea;"></div>
<div class="a " style="left:555px;top:582.5px;width:57px;height:20.5px;background:#fff;border:1px solid #dce3ea;"></div>
<div class="a " style="left:611px;top:582.5px;width:57px;height:20.5px;background:#fff;border:1px solid #dce3ea;"></div>
<div class="a " style="left:667px;top:582.5px;width:57px;height:20.5px;background:#fff;border:1px solid #dce3ea;"></div>
<div class="a " style="left:723px;top:582.5px;width:58px;height:20.5px;background:#fff;border:1px solid #dce3ea;"></div>
<div class="a " style="left:780px;top:582.5px;width:57px;height:20.5px;background:#fff;border:1px solid #dce3ea;"></div>
<div class="a " style="left:836px;top:582.5px;width:57px;height:20.5px;background:#fff;border:1px solid #dce3ea;"></div>
<div class="a " style="left:892px;top:582.5px;width:62px;height:20.5px;background:#fff;border:1px solid #dce3ea;"></div>
<div class="a " style="left:953px;top:582.5px;width:62px;height:20.5px;background:#fff;border:1px solid #dce3ea;"></div>
<div class="a " style="left:1014px;top:582.5px;width:62px;height:20.5px;background:#fff;border:1px solid #dce3ea;"></div>
<div class="t sr" style="left:66.5px;top:593.25px;">600</div>
<div class="t sr" style="left:117.5px;top:593.25px;">180</div>
<div class="t sr" style="left:185.5px;top:593.25px;">180</div>
<div class="t sr" style="left:252.5px;top:593.25px;">120</div>
<div class="t sr" style="left:320.5px;top:593.25px;">120</div>
<div class="t sr" style="left:387.5px;top:593.25px;">60</div>
<div class="t sr" style="left:444.5px;top:593.25px;">60</div>
<div class="t sr" style="left:500.5px;top:593.25px;">60</div>
<div class="t sr" style="left:556.5px;top:593.25px;">60</div>
<div class="t sr" style="left:612.5px;top:593.25px;">60</div>
<div class="t sr" style="left:668.5px;top:593.25px;">60</div>
<div class="t sr" style="left:724.5px;top:593.25px;">36</div>
<div class="t sr" style="left:781.5px;top:593.25px;">36</div>
<div class="t sr" style="left:837.5px;top:593.25px;">48</div>
<div class="t sr" style="left:893.5px;top:593.25px;">36</div>
<div class="t sr" style="left:954.5px;top:593.25px;">36</div>
<div class="t sr" style="left:1015.5px;top:593.25px;">48</div>
<div class="t " style="left:18.5px;top:471.5px;color:#333;">职员</div>
<div class="a " style="left:7px;top:582px;width:1068px;height:2px;background:#dce3ea;"></div>
<svg class="a" style="left:52px;top:464px" width="13" height="14"><path d="M2.8 5.8 V1.8 H7.6 L10.6 4.8 V11.4 H7.4" fill="none" stroke="#1a6fe0" stroke-width="1.6"/><path d="M1 9.5 H7 M4 6.5 V12.5" stroke="#1a6fe0" stroke-width="1.8"/></svg></body></html>
